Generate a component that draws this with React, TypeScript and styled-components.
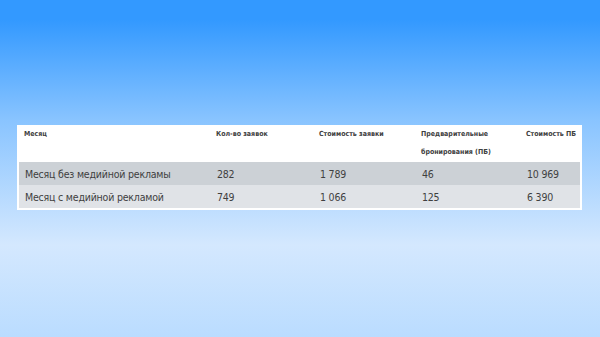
import React from 'react';
import styled, { createGlobalStyle } from 'styled-components';

// ==============================================================================
// Data
// ==============================================================================

interface Row {
  month: string;
  requests: string;
  requestCost: string;
  bookings: string;
  bookingCost: string;
}

const rows: Row[] = [
  { month: 'Месяц без медийной рекламы', requests: '282', requestCost: '1 789', bookings: '46', bookingCost: '10 969' },
  { month: 'Месяц с медийной рекламой', requests: '749', requestCost: '1 066', bookings: '125', bookingCost: '6 390' },
];

// ==============================================================================
// Styled Components
// ==============================================================================

const GlobalStyle = createGlobalStyle`
  html, body {
    margin: 0;
    padding: 0;
  }
  body {
    font-family: 'DejaVu Sans Condensed', 'DejaVu Sans', sans-serif;
    font-stretch: condensed;
  }
`;

const Page = styled.div`
  width: 600px;
  height: 337px;
  box-sizing: border-box;
  padding: 125px 18px 0 17px;
  background: linear-gradient(
    to bottom,
    #3399ff 0px,
    #3399ff 20px,
    #89c4ff 120px,
    #d4e8fe 245px,
    #badcff 337px
  );
  overflow: hidden;
`;

const Table = styled.table`
  width: 565px;
  box-sizing: border-box;
  border-collapse: separate;
  border-spacing: 0;
  background: #ffffff;
  padding: 0 2px 2px 2px;
  table-layout: fixed;
`;

const HeadCell = styled.th<{ $width: number }>`
  box-sizing: border-box;
  width: ${(p) => p.$width}px;
  height: 37px;
  text-align: left;
  vertical-align: top;
  padding: 0 0 0 5px;
  font-family: 'DejaVu Sans Condensed', 'DejaVu Sans', sans-serif;
  font-stretch: condensed;
  font-size: 7px;
  font-weight: 700;
  line-height: 18px;
  color: #404040;
`;

const BodyRow = styled.tr<{ $shade: 'dark' | 'light' }>`
  background: ${(p) => (p.$shade === 'dark' ? '#ccd1d6' : '#e0e3e7')};
`;

const BodyCell = styled.td`
  box-sizing: border-box;
  height: 23px;
  padding: 0 0 0 6px;
  font-family: 'DejaVu Sans Condensed', 'DejaVu Sans', sans-serif;
  font-stretch: condensed;
  font-size: 10.5px;
  letter-spacing: -0.2px;
  color: #3f3f3f;
  white-space: nowrap;
  vertical-align: middle;
`;

// ==============================================================================
// Main Component
// ==============================================================================

const App: React.FC = () => {
  return (
    <Page>
      <GlobalStyle />
      <Table>
        <thead>
          <tr>
            <HeadCell $width={192}>Месяц</HeadCell>
            <HeadCell $width={103}>Кол-во заявок</HeadCell>
            <HeadCell $width={102}>Стоимость заявки</HeadCell>
            <HeadCell $width={105}>Предварительные бронирования (ПБ)</HeadCell>
            <HeadCell $width={59}>Стоимость ПБ</HeadCell>
          </tr>
        </thead>
        <tbody>
          {rows.map((r, i) => (
            <BodyRow key={r.month} $shade={i === 0 ? 'dark' : 'light'}>
              <BodyCell>{r.month}</BodyCell>
              <BodyCell>{r.requests}</BodyCell>
              <BodyCell>{r.requestCost}</BodyCell>
              <BodyCell>{r.bookings}</BodyCell>
              <BodyCell>{r.bookingCost}</BodyCell>
            </BodyRow>
          ))}
        </tbody>
      </Table>
    </Page>
  );
};

export default App;
